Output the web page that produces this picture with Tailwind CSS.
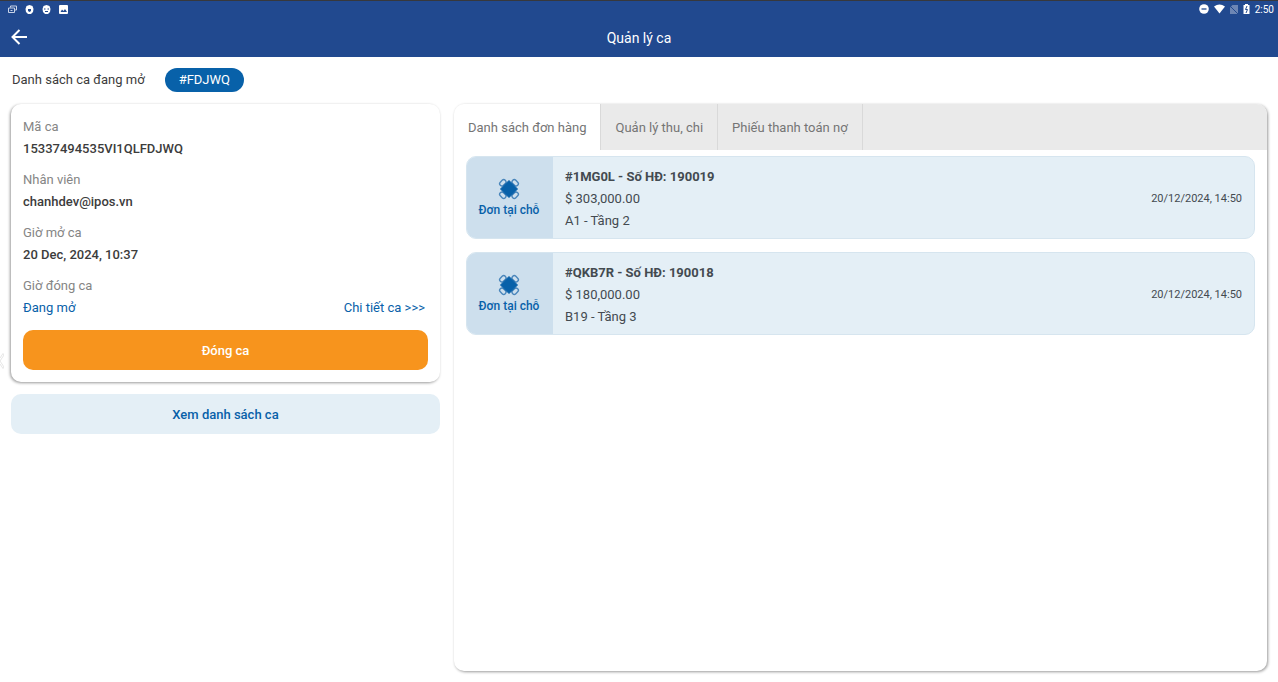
<!DOCTYPE html>
<html lang="vi">
<head>
<meta charset="utf-8">
<meta name="viewport" content="width=device-width, initial-scale=1">
<title>Quản lý ca</title>
<script src="https://cdn.jsdelivr.net/npm/@tailwindcss/browser@4"></script>
</head>
<body class="relative flex min-h-screen flex-col bg-white font-['Roboto','Noto_Sans',sans-serif] text-[13px] text-[#3c3c3c]">
<svg class="hidden">
  <symbol id="table" viewBox="0 0 22 22">
    <g fill="none" stroke="#4a86bb" stroke-width="1.4">
      <rect x="1.500" y="2.500" width="7" height="4.500" rx="2.200" transform="rotate(-45 5 5)"/>
      <rect x="13.500" y="2.500" width="7" height="4.500" rx="2.200" transform="rotate(45 17 5)"/>
      <rect x="1.500" y="15" width="7" height="4.500" rx="2.200" transform="rotate(45 5 17)"/>
      <rect x="13.500" y="15" width="7" height="4.500" rx="2.200" transform="rotate(-45 17 17)"/>
    </g>
    <path d="M11 2.500 19.500 11 11 19.500 2.500 11z" fill="#0861a9" stroke="#0861a9" stroke-linejoin="round"/>
  </symbol>
</svg>

<header class="border-t border-[#37383c] bg-[#21498f] text-white">
  <div class="flex h-4 items-center justify-between pr-1 pl-2">
    <div class="flex items-center gap-2">
      <svg class="size-[9px]" viewBox="0 0 9 9" fill="none" stroke="#c9d4e8"><path d="M2.500 2.500V1h6v4H7M.5 3h6v4.500h-6zM2.500 5.500h2"/></svg>
      <svg class="size-[9px]" viewBox="0 0 9 9"><path d="M4.500 0 7.500 1 8.500 4 8 7 6 9H3L1 7 .5 4 1.500 1z" fill="#fff"/><path d="M3 4h3v2L4.500 7 3 6z" fill="#21498f"/></svg>
      <svg class="size-[9px]" viewBox="0 0 9 9"><path d="M4.500 0 7.500 1 8.500 4 8 7 6 9H3L1 7 .5 4 1.500 1z" fill="#fff"/><path d="M2 4h1.500M5.500 4H7M3 6.500h3" stroke="#21498f"/></svg>
      <svg class="size-[9px]" viewBox="0 0 9 9"><rect width="9" height="9" rx="1" fill="#fff"/><path d="m1.500 7 1.500-2.500 1.500 1.500L6 4l2 3z" fill="#21498f"/></svg>
    </div>
    <div class="flex items-center gap-[5px] text-[10px] leading-4">
      <svg class="size-[10px]" viewBox="0 0 10 10"><circle cx="5" cy="5" r="4.800" fill="#fff"/><path d="M2.500 5h5" stroke="#21498f" stroke-width="1.300"/></svg>
      <svg class="h-[10px] w-[11px]" viewBox="0 0 11 10"><path d="M0 2.500Q5.500-1.500 11 2.500L5.500 9.500z" fill="#fff"/></svg>
      <svg class="h-[9px] w-2" viewBox="0 0 8 9"><path d="M2.500 0H8v9H0V2.500z" fill="#6d86b4"/><path d="m0 1 8 8" stroke="#21498f"/></svg>
      <svg class="h-[10px] w-[7px]" viewBox="0 0 7 10"><path d="M2 0h3v1h1.500v9h-6V1H2z" fill="#fff"/><path d="M4 2 2.500 5.500h2L3 9" fill="none" stroke="#21498f"/></svg>
      <span class="pt-px">2:50</span>
    </div>
  </div>
  <div class="grid h-10 grid-cols-[1fr_auto_1fr] items-center px-[11px]">
    <button type="button" aria-label="Quay lại" class="justify-self-start">
      <svg class="size-4" viewBox="0 0 16 16" fill="none" stroke="#fff" stroke-width="2"><path d="M16 8H1.500M8.500 1 1.500 8l7 7"/></svg>
    </button>
    <h1 class="pt-[2px] text-sm">Quản lý ca</h1>
  </div>
</header>

<main class="flex grow flex-col px-[11px] pb-[11px]">
  <div class="mb-[2px] flex h-[45px] items-center gap-5 pl-px">
    <span>Danh sách ca đang mở</span>
    <button type="button" class="h-6 rounded-full bg-[#0861a9] px-[14px] text-white">#FDJWQ</button>
  </div>

  <div class="grid grow grid-cols-[429fr_813fr] gap-[14px]">
    <section class="flex flex-col gap-3">
      <div class="rounded-[10px] bg-white p-3 shadow-[-1px_1px_3px_rgba(0,0,0,0.4)]">
        <dl class="flex flex-col gap-[9px] leading-[22px]">
          <div><dt class="text-[#858585]">Mã ca</dt><dd class="font-medium">15337494535VI1QLFDJWQ</dd></div>
          <div><dt class="text-[#858585]">Nhân viên</dt><dd class="font-medium">chanhdev@ipos.vn</dd></div>
          <div><dt class="text-[#858585]">Giờ mở ca</dt><dd class="font-medium">20 Dec, 2024, 10:37</dd></div>
          <div><dt class="text-[#858585]">Giờ đóng ca</dt><dd class="flex justify-between pr-[3px] text-[#0861a9]"><span>Đang mở</span><a href="#">Chi tiết ca &gt;&gt;&gt;</a></dd></div>
        </dl>
        <button type="button" class="mt-[11px] h-10 w-full rounded-[10px] bg-[#f7941d] pt-[2px] font-medium text-white">Đóng ca</button>
      </div>
      <button type="button" class="h-10 w-full rounded-[10px] bg-[#e4eff6] pt-[2px] font-medium text-[#0861a9]">Xem danh sách ca</button>
    </section>

    <section class="overflow-hidden rounded-[10px] bg-white shadow-[1px_1px_3px_rgba(0,0,0,0.4)]">
      <div role="tablist" class="flex h-[46px] bg-[#eaeaea] text-[#757575]">
        <button type="button" role="tab" aria-selected="true" class="border-r border-[#d9d9d9] bg-white px-[14px] pt-px">Danh sách đơn hàng</button>
        <button type="button" role="tab" aria-selected="false" class="border-r border-[#d9d9d9] px-[14px] pt-px">Quản lý thu, chi</button>
        <button type="button" role="tab" aria-selected="false" class="border-r border-[#d9d9d9] px-[14px] pt-px">Phiếu thanh toán nợ</button>
      </div>
      <ul class="flex flex-col gap-[13px] px-3 pt-[6px] text-[#434a50]">
        <li class="flex h-[83px] items-stretch overflow-hidden rounded-[10px] border border-[#d6e5ef] bg-[#e4eff6]">
          <div class="flex w-[86px] shrink-0 flex-col items-center justify-center bg-[#cddfed] pt-[2px] pr-[2px] text-xs font-medium text-[#0861a9]">
            <svg class="size-[22px]" aria-hidden="true"><use href="#table"/></svg>
            <span class="leading-5">Đơn tại chỗ</span>
          </div>
          <div class="flex grow items-center justify-between px-3 pt-[2px] leading-[22px]">
            <div><p class="font-bold">#1MG0L - Số HĐ: 190019</p><p>$ 303,000.00</p><p>A1 - Tầng 2</p></div>
            <time class="text-[11px]">20/12/2024, 14:50</time>
          </div>
        </li>
        <li class="flex h-[83px] items-stretch overflow-hidden rounded-[10px] border border-[#d6e5ef] bg-[#e4eff6]">
          <div class="flex w-[86px] shrink-0 flex-col items-center justify-center bg-[#cddfed] pt-[2px] pr-[2px] text-xs font-medium text-[#0861a9]">
            <svg class="size-[22px]" aria-hidden="true"><use href="#table"/></svg>
            <span class="leading-5">Đơn tại chỗ</span>
          </div>
          <div class="flex grow items-center justify-between px-3 pt-[2px] leading-[22px]">
            <div><p class="font-bold">#QKB7R - Số HĐ: 190018</p><p>$ 180,000.00</p><p>B19 - Tầng 3</p></div>
            <time class="text-[11px]">20/12/2024, 14:50</time>
          </div>
        </li>
      </ul>
    </section>
  </div>
</main>
<svg class="absolute top-[352px] left-0 h-[18px] w-1" viewBox="0 0 4 18" fill="none" stroke="#e6e6e6" aria-hidden="true"><path d="M0 6 3 1.500l1 1.500L0 9l4 6-1 1.500L0 12"/></svg>
</body>
</html>
